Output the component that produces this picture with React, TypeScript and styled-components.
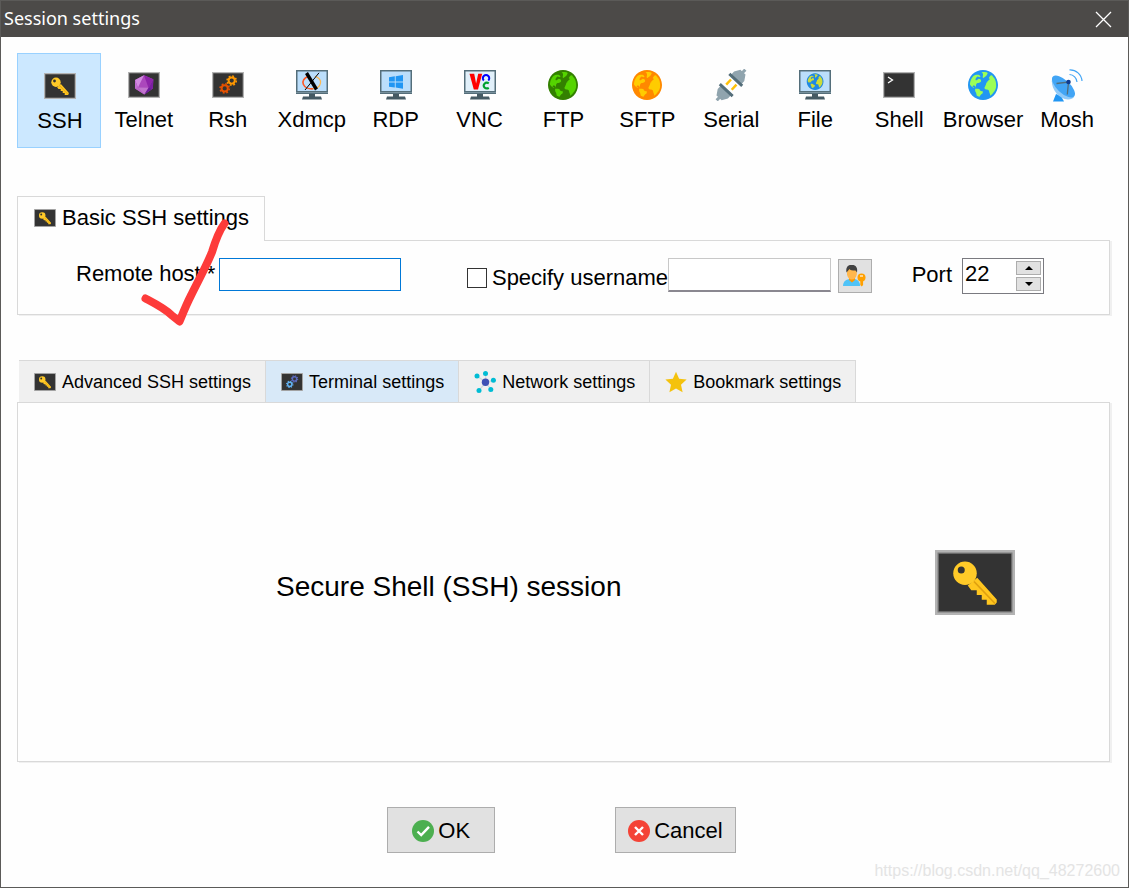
import React, { useState } from "react";
import styled, { createGlobalStyle } from "styled-components";

const GlobalStyle = createGlobalStyle`
  * { box-sizing: border-box; }
  body { margin: 0; background: #fefefe; }
  body, button, input {
    font-family: "Liberation Sans", Arial, sans-serif;
    color: #000;
  }
  svg { display: block; flex: none; }
`;

const Window = styled.div`
  position: relative;
  display: flex;
  flex-direction: column;
  min-height: 100vh;
  border: 1px solid #5b5a58;
  background: #fefefe;
`;

const TitleBar = styled.header`
  display: flex;
  align-items: center;
  justify-content: space-between;
  height: 36px;
  padding: 0 16px 0 3px;
  background: #4c4a48;
  color: #fff;
`;

const Title = styled.h1`
  margin: 0;
  padding-bottom: 2px;
  font: 400 18px/24px "Noto Sans", "Open Sans", sans-serif;
`;

const CloseButton = styled.button`
  padding: 0;
  border: 0;
  background: none;
`;

const Content = styled.main`
  display: flex;
  flex: 1;
  flex-direction: column;
  padding: 16px 18px 34px 16px;
`;

const Toolbar = styled.nav`
  display: grid;
  grid-template-columns: repeat(13, 1fr);
  height: 95px;
  padding-right: 2px;
`;

const ToolButton = styled.button<{ $active: boolean }>`
  display: flex;
  flex-direction: column;
  align-items: center;
  min-width: 0;
  padding: 15px 0 0 2px;
  border: ${(p) => (p.$active ? "1px solid #99d1ff" : "0")};
  background: ${(p) => (p.$active ? "#cce8ff" : "transparent")};
  font-size: 22px;
  line-height: 26px;
  white-space: nowrap;
`;

const ToolIcon = styled.span`
  display: flex;
  align-items: center;
  justify-content: center;
  height: 34px;
  margin-bottom: 5px;
`;

const Section = styled.section<{ $grow?: boolean }>`
  position: relative;
  display: flex;
  flex-direction: column;
  flex: ${(p) => (p.$grow ? "1" : "none")};
  margin-top: ${(p) => (p.$grow ? "45px" : "48px")};
`;

const Panel = styled.div`
  border: 1px solid #d9d9d9;
  box-shadow: 2px 1px 0 #f0f0f0;
`;

const BasicTab = styled.h2`
  display: flex;
  align-items: center;
  align-self: flex-start;
  gap: 6px;
  height: 45px;
  margin: 0 0 -1px;
  padding: 0 15px 2px 16px;
  border: 1px solid #d9d9d9;
  border-bottom: 0;
  background: #fefefe;
  font-size: 22px;
  font-weight: 400;
  z-index: 1;
`;

const Fields = styled(Panel)`
  display: flex;
  align-items: flex-start;
  height: 75px;
  padding: 17px 65px 0 58px;
  font-size: 22px;
`;

const FieldLabel = styled.label<{ $height: number }>`
  flex: none;
  line-height: ${(p) => p.$height}px;
  white-space: nowrap;
`;

const HostInput = styled.input`
  flex: 1 1 182px;
  min-width: 0;
  height: 33px;
  margin: 0 66px 0 4px;
  padding: 0 4px;
  border: 1px solid #0078d7;
  border-radius: 0;
  outline: 0;
  background: #fff;
  font-size: 22px;
`;

const Check = styled.input`
  appearance: none;
  flex: none;
  width: 20px;
  height: 20px;
  margin: 10px 5px 0 0;
  border: 1px solid #333;
  background: #fff;
`;

const UserInput = styled.input`
  flex: 1 1 163px;
  min-width: 0;
  height: 34px;
  padding: 0 4px;
  border: 1px solid #c8c8c8;
  border-bottom: 2px solid #8a8790;
  border-radius: 0;
  outline: 0;
  background: #fff;
  font-size: 22px;
`;

const IconButton = styled.button`
  display: flex;
  flex: none;
  align-items: center;
  justify-content: center;
  width: 34px;
  height: 34px;
  margin: 1px 40px 0 7px;
  padding: 0;
  border: 1px solid #adadad;
  background: #e1e1e1;
`;

const PortBox = styled.div`
  display: flex;
  flex: none;
  width: 82px;
  height: 36px;
  margin-left: 10px;
  padding: 2px;
  border: 1px solid #7a7a80;
  background: #fff;
`;

const PortInput = styled.input`
  flex: 1;
  min-width: 0;
  height: 26px;
  padding: 0;
  border: 0;
  outline: 0;
  background: none;
  font-size: 22px;
`;

const Steppers = styled.div`
  display: grid;
  grid-template-rows: 14px 14px;
  gap: 2px;
  width: 25px;
`;

const StepButton = styled.button`
  display: flex;
  align-items: center;
  justify-content: center;
  padding: 0;
  border: 1px solid #adadad;
  background: #e1e1e1;
`;

const TabStrip = styled.div`
  display: flex;
  align-self: flex-start;
  margin-left: 2px;
  border-top: 1px solid #d9d9d9;
`;

const Tab = styled.button<{ $hot?: boolean }>`
  display: flex;
  align-items: center;
  gap: 6px;
  height: 41px;
  padding: 1px 14px 0 15px;
  border: 0;
  border-right: 1px solid #d9d9d9;
  background: ${(p) => (p.$hot ? "#d8e9f8" : "#f0f0f0")};
  font-size: 18px;
  white-space: nowrap;
`;

const Summary = styled(Panel)`
  display: flex;
  flex: 1;
  align-items: center;
  justify-content: space-between;
  min-height: 200px;
  padding: 0 94px 0 258px;
`;

const SummaryText = styled.p`
  margin: 0;
  padding-top: 10px;
  font-size: 28px;
  line-height: 32px;
`;

const Actions = styled.footer`
  display: flex;
  justify-content: center;
  gap: 120px;
  margin-top: 45px;
  padding-right: 4px;
`;

const ActionButton = styled.button`
  display: flex;
  align-items: center;
  gap: 4px;
  height: 46px;
  padding: 1px 24px 0;
  border: 1px solid #adadad;
  background: #e1e1e1;
  font-size: 22px;
  &:last-child { padding: 1px 12px 0; }
`;

const Watermark = styled.span`
  position: absolute;
  right: 8px;
  bottom: 5px;
  color: #e4e4e4;
  font-size: 16px;
  line-height: 22px;
`;

const TickOverlay = styled.svg`
  position: absolute;
  top: 19px;
  left: 123px;
  z-index: 2;
  pointer-events: none;
`;

type Kids = { children?: React.ReactNode };

const Tile = ({ w = 32, h = 26, children }: Kids & { w?: number; h?: number }) => (
  <svg width={w} height={h} viewBox="0 0 32 26" preserveAspectRatio="none" aria-hidden="true">
    <rect width="32" height="26" fill="#b3b3b3" />
    <rect x="1" y="1" width="30" height="24" fill="#7d7d7d" />
    <rect x="1.5" y="1.5" width="29" height="23" fill="#333" />
    {children}
  </svg>
);

const KeyArt = () => (
  <>
    <path d="M16.9 11.1 24.7 19.8V21l-.8.9h-3.2v-2h-2v-1.9h-2v-1.900h-2.200l-1.400-1.900z" fill="#ffc61f" />
    <path d="M15.6 12.6 24 21.4" stroke="#dfa010" strokeWidth=".7" />
    <circle cx="12" cy="9.3" r="4.7" fill="#ffca28" />
    <circle cx="10.5" cy="8" r="1.4" fill="#333" />
  </>
);

const Gear = ({ cx, cy, color }: { cx: number; cy: number; color: string }) => (
  <g fill="none" stroke={color}>
    <circle cx={cx} cy={cy} r="3.1" strokeWidth="2" />
    <circle cx={cx} cy={cy} r="4.6" strokeWidth="1.6" strokeDasharray="1.8 1.81" />
  </g>
);

const GearsArt = ({ front, back }: { front: string; back: string }) => (
  <>
    <Gear cx={19.7} cy={8.6} color={back} />
    <Gear cx={12.7} cy={16.4} color={front} />
  </>
);

const GemArt = () => (
  <>
    <path d="M16 3.2 25.3 7.3 24.9 16.4 16.3 22.4 7 16.4V8z" fill="#ab47bc" />
    <path d="M16 3.2 7 8l3 7.5z" fill="#d18be0" />
    <path d="M7 8v8.400l3-.9z" fill="#c06fd1" />
    <path d="M7 16.400l9.300 6L10 15.500z" fill="#ba68c8" />
    <path d="M10 15.500l6.300 6.900 4.200-6.600z" fill="#ce93d8" opacity=".6" />
    <path d="M16 3.200l9.300 4.100-4.800 8.500z" fill="#8e24aa" />
    <path d="M25.300 7.300l-.4 9.100-4.400-.6z" fill="#7b1fa2" />
    <path d="M24.900 16.400l-8.600 6 4.200-6.600z" fill="#6a1b9a" />
  </>
);

const Monitor = ({ screen = "#bbdefb", children }: Kids & { screen?: string }) => (
  <svg width="32" height="30" viewBox="0 0 32 30" aria-hidden="true">
    <rect width="32" height="24" fill="#546e7a" />
    <rect x="1.500" y="1.500" width="29" height="19.500" fill={screen} />
    <rect y="22" width="32" height="1" fill="#78909c" />
    <path d="M13 24h6v2.500h6l1 3H6l1-3h6z" fill="#455a64" />
    {children}
  </svg>
);

const GLOBE =
  "M45 24c0 11.7-9.5 21-21 21S3 35.7 3 24 12.3 3 24 3s21 9.3 21 21zm-21.2 9.7c0-.4-.2-.6-.6-.8-1.3-.4-2.5-.4-3.6-1.5-.2-.4-.2-.8-.4-1.3-.4-.4-1.5-.6-2.1-.8h-4.200c-.6-.2-1.100-1.100-1.500-1.700 0-.2 0-.6-.4-.6-.4-.2-.8.2-1.300 0-.2-.2-.2-.4-.2-.6 0-.6.4-1.300.8-1.700.6-.4 1.300.2 1.900.2.2 0 .2 0 .4.2.6.2.8 1 .8 1.700v.4c0 .2.2.2.4.2.2-1.100.2-2.100.4-3.200 0-1.300 1.300-2.500 2.300-2.900.4-.2.6.2 1.100 0 1.300-.4 4.400-1.700 3.800-3.400-.4-1.500-1.700-2.900-3.400-2.700-.4.2-.6.4-1 .6-.6.4-1.900 1.700-2.500 1.700-1.100-.2-1.100-1.700-.8-2.300.2-.8 2.100-3.600 3.400-3.100l.8.8c.4.2 1.100.2 1.700.2.2 0 .4 0 .6-.2.2-.2.2-.2.2-.4 0-.6-.6-1.300-1-1.700s-1.100-.8-1.700-1.100c-2.100-.6-5.500.2-7.100 1.700s-2.900 4-3.800 6.100c-.4 1.300-.8 2.700-1 4-.2.8-.4 1.500.2 2.100.6 1.300 1.900 2.500 3.200 3.400.8.6 2.500.6 3.400 1.700.6.8.4 1.900.4 2.900 0 1.300.8 2.300 1.300 3.400.2.6.4 1.500.6 2.100 0 .2.2 1.500.2 1.700 1.300.6 2.300 1.300 3.800 1.700.2 0 1-1.300 1-1.500.6-.6 1.100-1.500 1.700-1.900.4-.2.8-.4 1.300-.8.4-.4.6-1.300.8-1.900.1-.5.3-1.300.1-1.900zm.4-19.400c.2 0 .4-.2.8-.4.6-.4 1.300-1.100 1.900-1.500.6-.4 1.300-1.100 1.700-1.500.6-.4 1.100-1.300 1.300-1.900.2-.4.8-1.300.6-1.900-.2-.4-1.300-.6-1.700-.8-1.700-.4-3.100-.6-4.800-.6-.6 0-1.500.2-1.700.8-.2 1.100.6.8 1.500 1.100 0 0 .2 1.700.2 1.900.2 1-.4 1.700-.4 2.700 0 .6 0 1.700.4 2.100h.2zM41.8 29c.2-.4.2-1.100.4-1.500.2-1 .2-2.100.2-3.100 0-2.100-.2-4.200-.8-6.100-.4-.6-.6-1.300-.8-1.900-.4-1.100-1-2.100-1.900-2.900-.8-1.100-1.900-4-3.800-3.100-.6.2-1 1-1.500 1.500-.4.6-.8 1.300-1.300 1.900-.2.2-.4.6-.2.8 0 .2.2.2.4.2.4.2.6.2 1 .4.2 0 .4.2.2.4 0 0 0 .2-.2.2-1 1.100-2.100 1.900-3.100 2.900-.2.2-.4.6-.4.8s.2.2.2.4-.2.2-.4.4c-.4.2-.8.4-1.100.6-.2.4 0 1.100-.2 1.500-.2 1.100-.8 1.900-1.300 2.900-.4.6-.6 1.300-1 1.900 0 .8-.2 1.500.2 2.100 1 1.500 2.900.6 4.400 1.300.4.2.8.2 1.100.6.6.6.6 1.700.8 2.300.2.8.4 1.700.8 2.500.2 1 .6 2.100.8 2.900 1.900-1.500 3.600-3.100 4.800-5.200 1.500-1.300 2.100-3 2.700-4.800z";

const GlobeArt = ({ sea, land }: { sea: string; land: string }) => (
  <>
    <circle cx="24" cy="24" r="20" fill={land} />
    <path d={GLOBE} fill={sea} />
  </>
);

const Globe = (p: { sea: string; land: string }) => (
  <svg width="30" height="30" viewBox="3 3 42 42" aria-hidden="true">
    <GlobeArt {...p} />
  </svg>
);

const XLogo = () => (
  <g fill="none">
    <path d="M12 6.500A9 6.500 0 0 0 17 18.800" stroke="#ff5722" strokeWidth="1.600" />
    <path d="M19 6.400A9 6.500 0 0 1 17 18.800" stroke="#ffb74d" strokeWidth="1.200" />
    <path d="M23 2.800 9 20" stroke="#000" strokeWidth="1" />
    <path d="M10.500 3 20.500 19.500" stroke="#000" strokeWidth="3.400" />
  </g>
);

const WindowsLogo = () => (
  <path
    d="M9 7.200 14.800 6.300V11.500H9zM15.700 6.200 23 5V11.500H15.700zM9 12.400H14.800V17.500L9 16.700zM15.700 12.400H23V18.700L15.700 17.600z"
    fill="#2196f3"
  />
);

const VncLogo = () => (
  <g fill="none">
    <path d="M5.500 3.800H10.200L12.100 13.500 14.200 3.800H18.200L14 19.500H9.800z" fill="#f00" />
    <path d="M19.800 10.500A3.200 3.200 0 1 1 24.300 10.500" stroke="#00f" strokeWidth="2" />
    <path d="M24.800 13.300A3.200 2.800 0 1 0 24.800 17.800" stroke="#00a030" strokeWidth="2.200" />
  </g>
);

const SerialIcon = () => (
  <svg width="32" height="32" viewBox="0 0 32 32" aria-hidden="true">
    <g transform="rotate(43 16 16)">
      <path d="M14.500-5h3v5h-3zM14.500 32h3v5h-3z" fill="#90a4ae" />
      <path d="M9 8V4L12.500-1.500h7L23 4V8zM9 24v4l3.500 5.500h7L23 28V24z" fill="#90a4ae" />
      <path d="M11 12h2.500v7H11zM18.500 12H21v7h-2.500z" fill="#ffc107" />
      <path d="M7.200 7.500h17.600v3H7.200zM7.200 21.500h17.600v3H7.200z" fill="#546e7a" />
    </g>
  </svg>
);

const DishIcon = () => (
  <svg width="32" height="33" viewBox="0 0 32 33" aria-hidden="true">
    <path d="M5 25 2 32.500H13L10 27z" fill="#2196f3" />
    <path d="M1.500 8C-1.500 17 6 30 17 30.500 20 30.500 22 29.500 23 28z" fill="#90caf9" />
    <ellipse cx="12.500" cy="17.500" rx="14.500" ry="6.500" transform="rotate(43 12.500 17.500)" fill="#42a5f5" />
    <path d="M5.500 14.500 17.500 13 16.300 25.500" stroke="#546e7a" strokeWidth="1.300" fill="none" />
    <circle cx="17.500" cy="13" r="2.300" fill="#0d3c92" />
    <path d="M18.500 5.500A8 8 0 0 1 26 13M18.500.8A12 12 0 0 1 31 12" stroke="#42a5f5" strokeWidth="1.200" fill="none" />
  </svg>
);

const UserKeyIcon = () => (
  <svg width="24" height="24" viewBox="0 0 24 24" aria-hidden="true">
    <path d="M0 22C.3 17 3 16 6 15l3 2 3-2c3 .8 5 3 5.200 7z" fill="#4fc3f7" />
    <path d="M6 12h6v4l-3 2.500L6 16z" fill="#ff9800" />
    <path d="M4 5h9.800v5.500c-.5 3-2.500 5-4.900 5s-4.500-2-4.900-5z" fill="#ffb74d" />
    <path d="M3.500 8.500C2.500 3 5 .5 9 1c3.500-.2 6 2.500 5 7.500l-1.500-2C9 6.500 7 6 6.500 5z" fill="#424242" />
    <circle cx="18.500" cy="13.500" r="4" fill="#ffa000" />
    <path d="M17.300 16.500h2.800v4.500L18.700 22.500 17.300 21z" fill="#ffa000" />
    <path d="M17 12h3" stroke="#fff3e0" strokeWidth="1.300" />
  </svg>
);

const NetworkIcon = () => (
  <svg width="22" height="22" viewBox="0 0 22 22" aria-hidden="true">
    <path d="M3 5l8.700 6.300V2.700M19.500 9.300l-7.800 2L17 18.700M5 19.500l6.700-8.200" stroke="#cfd8dc" strokeWidth="1.200" fill="none" />
    <circle cx="11.500" cy="11.300" r="3.700" fill="#3f51b5" />
    {[[3, 5], [11.5, 2.6], [19.4, 9.3], [16.8, 18.6], [5, 19.4]].map(([x, y]) => (
      <circle key={x} cx={x} cy={y} r="2.500" fill="#00bcd4" />
    ))}
  </svg>
);

const StarIcon = () => (
  <svg width="22" height="22" viewBox="0 0 22 22" aria-hidden="true">
    <path d="M11 .8l3.100 7 7.500.8-5.600 5.100 1.600 7.500L11 17.400l-6.600 3.800L6 13.700.4 8.600l7.500-.8z" fill="#f4c20d" />
  </svg>
);

const RoundIcon = ({ color, d }: { color: string; d: string }) => (
  <svg width="22" height="22" viewBox="0 0 22 22" aria-hidden="true">
    <circle cx="11" cy="11" r="11" fill={color} />
    <path d={d} stroke="#fff" strokeWidth="2.400" fill="none" />
  </svg>
);

const Arrow = ({ d }: { d: string }) => (
  <svg width="8" height="4" viewBox="0 0 8 4" aria-hidden="true">
    <path d={d} fill="#000" />
  </svg>
);

const sessions: { name: string; icon: React.ReactNode }[] = [
  { name: "SSH", icon: <Tile><KeyArt /></Tile> },
  { name: "Telnet", icon: <Tile><GemArt /></Tile> },
  { name: "Rsh", icon: <Tile><GearsArt front="#e65100" back="#ff9800" /></Tile> },
  { name: "Xdmcp", icon: <Monitor><XLogo /></Monitor> },
  { name: "RDP", icon: <Monitor><WindowsLogo /></Monitor> },
  { name: "VNC", icon: <Monitor screen="#e1f0fa"><VncLogo /></Monitor> },
  { name: "FTP", icon: <Globe sea="#338000" land="#55d400" /> },
  { name: "SFTP", icon: <Globe sea="#ff8800" land="#ffcc00" /> },
  { name: "Serial", icon: <SerialIcon /> },
  {
    name: "File",
    icon: (
      <Monitor>
        <g transform="translate(6.500 2) scale(.4)"><GlobeArt sea="#1e88e5" land="#cddc39" /></g>
      </Monitor>
    ),
  },
  { name: "Shell", icon: <Tile><path d="M5 5l4.500 3L5 11" stroke="#fff" strokeWidth="1.300" fill="none" /></Tile> },
  { name: "Browser", icon: <Globe sea="#2196f3" land="#9cff57" /> },
  { name: "Mosh", icon: <DishIcon /> },
];

const tabs: { name: string; icon: React.ReactNode; hot?: boolean }[] = [
  { name: "Advanced SSH settings", icon: <Tile w={22} h={18}><KeyArt /></Tile> },
  { name: "Terminal settings", icon: <Tile w={22} h={18}><GearsArt front="#64b5f6" back="#5c6bc0" /></Tile>, hot: true },
  { name: "Network settings", icon: <NetworkIcon /> },
  { name: "Bookmark settings", icon: <StarIcon /> },
];

export default function App() {
  const [active, setActive] = useState("SSH");
  const [port, setPort] = useState(22);

  return (
    <Window>
      <GlobalStyle />
      <TitleBar>
        <Title>Session settings</Title>
        <CloseButton aria-label="Close">
          <svg width="17" height="17" viewBox="0 0 17 17" aria-hidden="true">
            <path d="M1 1l15 15M16 1L1 16" stroke="#fff" strokeWidth="1.300" />
          </svg>
        </CloseButton>
      </TitleBar>
      <Content>
        <Toolbar>
          {sessions.map((s) => (
            <ToolButton key={s.name} $active={s.name === active} onClick={() => setActive(s.name)}>
              <ToolIcon>{s.icon}</ToolIcon>
              {s.name}
            </ToolButton>
          ))}
        </Toolbar>

        <Section>
          <BasicTab>
            <Tile w={22} h={18}><KeyArt /></Tile>
            Basic SSH settings
          </BasicTab>
          <Fields>
            <FieldLabel htmlFor="host" $height={32}>Remote host *</FieldLabel>
            <HostInput id="host" />
            <Check id="specify" type="checkbox" />
            <FieldLabel htmlFor="specify" $height={40}>Specify username</FieldLabel>
            <UserInput aria-label="Username" />
            <IconButton aria-label="Manage users"><UserKeyIcon /></IconButton>
            <FieldLabel htmlFor="port" $height={34}>Port</FieldLabel>
            <PortBox>
              <PortInput id="port" value={port} onChange={(e) => setPort(Number(e.target.value) || 0)} />
              <Steppers>
                <StepButton aria-label="Increase port" onClick={() => setPort(port + 1)}>
                  <Arrow d="M0 4L4 0l4 4z" />
                </StepButton>
                <StepButton aria-label="Decrease port" onClick={() => setPort(port - 1)}>
                  <Arrow d="M0 0l4 4 4-4z" />
                </StepButton>
              </Steppers>
            </PortBox>
          </Fields>
          <TickOverlay width="95" height="115" viewBox="140 215 95 115" aria-hidden="true">
            <path
              d="M145.500 298.500C155 303.500 165 308.500 172 315.500L179.500 321.500C183 313 187 303 191 295.500 198 281 206 267 212 252 215 242 219 231 224.500 223.500"
              fill="none"
              stroke="#fd3b3a"
              strokeWidth="8"
              strokeLinecap="round"
              strokeLinejoin="round"
            />
          </TickOverlay>
        </Section>

        <Section $grow>
          <TabStrip>
            {tabs.map((t) => (
              <Tab key={t.name} $hot={t.hot}>
                {t.icon}
                {t.name}
              </Tab>
            ))}
          </TabStrip>
          <Summary>
            <SummaryText>Secure Shell (SSH) session</SummaryText>
            <Tile w={80} h={65}><KeyArt /></Tile>
          </Summary>
        </Section>

        <Actions>
          <ActionButton>
            <RoundIcon color="#4caf50" d="M5.500 11.500l3.700 3.500L17 6.800" />
            OK
          </ActionButton>
          <ActionButton>
            <RoundIcon color="#f44336" d="M7 7l8 8M15 7l-8 8" />
            Cancel
          </ActionButton>
        </Actions>
      </Content>
      <Watermark>https://blog.csdn.net/qq_48272600</Watermark>
    </Window>
  );
}
